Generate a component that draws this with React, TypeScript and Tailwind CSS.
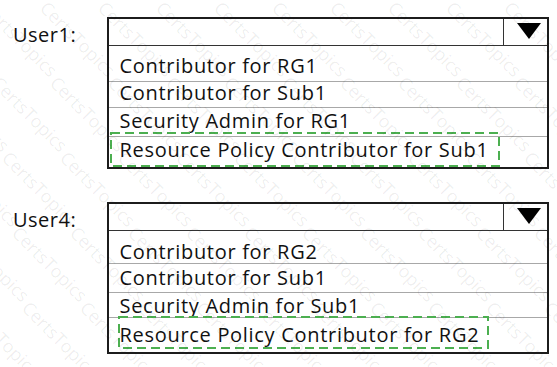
import React from "react";

type Row = { label: string; h: number; pt: number; line: boolean };

type Block = {
  user: string;
  rows: Row[];
  pick: { left: number; top: number; w: number; h: number };
};

const blocks: Block[] = [
  {
    user: "User1:",
    rows: [
      { label: "Contributor for RG1", h: 36, pt: 9.5, line: true },
      { label: "Contributor for Sub1", h: 26, pt: 0.5, line: true },
      { label: "Security Admin for RG1", h: 29, pt: 2.5, line: true },
      { label: "Resource Policy Contributor for Sub1", h: 30, pt: 2.5, line: false },
    ],
    pick: { left: 1, top: -5, w: 390, h: 35 },
  },
  {
    user: "User4:",
    rows: [
      { label: "Contributor for RG2", h: 33, pt: 10.5, line: true },
      { label: "Contributor for Sub1", h: 29, pt: 3.5, line: true },
      { label: "Security Admin for Sub1", h: 25, pt: 2.5, line: true },
      { label: "Resource Policy Contributor for RG2", h: 34, pt: 6.5, line: false },
    ],
    pick: { left: 9, top: -2, w: 371, h: 33 },
  },
];

function DashedBox({ w, h }: { w: number; h: number }) {
  return (
    <svg width={w} height={h} className="block">
      <rect
        x={1}
        y={1}
        width={w - 2}
        height={h - 2}
        fill="none"
        stroke="#4caf50"
        strokeWidth={2}
        strokeDasharray="9 5"
      />
    </svg>
  );
}

// faint diagonal "CertsTopics" stamp over the whole picture
function Watermark() {
  const marks = [];
  for (let r = 0; r < 6; r++) {
    for (let c = 0; c < 11; c++) {
      marks.push(
        <span
          key={`${r}-${c}`}
          className="absolute whitespace-nowrap text-[18px] leading-none text-[rgba(0,0,0,0.07)] origin-top-left rotate-45"
          style={{ left: c * 58 + r * 10 - 66, top: r * 75 - 2 }}
        >
          CertsTopics
        </span>
      );
    }
  }
  return <div className="pointer-events-none absolute inset-0 overflow-hidden">{marks}</div>;
}

export default function App() {
  return (
    <div
      className="relative w-[557px] h-[367px] overflow-hidden bg-white text-[#111]"
      style={{ fontFamily: "'Open Sans', 'Noto Sans', sans-serif" }}
    >
      <div className="flex flex-col gap-[33px] pt-[17px]">
        {blocks.map((b) => (
          <div key={b.user} className="flex">
            <div className="w-[107px] pl-[13px] pt-[7.5px] text-[20px] leading-none tracking-[0.5px]">
              {b.user}
            </div>
            <div className="w-[442px] border-2 border-[#1c1c1c]">
              <div className="flex h-[27px] border-b border-[#333]">
                <div className="flex-1" />
                <div className="w-[44px] border-l border-[#333] pl-[13px] pt-[4px]">
                  <svg width="24" height="16" viewBox="0 0 24 16" className="block">
                    <path d="M0 0 H24 L12 16 Z" fill="#000" />
                  </svg>
                </div>
              </div>
              {b.rows.map((row, i) => (
                <div
                  key={row.label}
                  className={`relative pl-[10.5px] text-[20px] leading-none tracking-[0.7px] ${row.line ? "border-b border-[#a8a8a8]" : ""}`}
                  style={{ height: row.h, paddingTop: row.pt }}
                >
                  {row.label}
                  {i === b.rows.length - 1 && (
                    <div className="absolute" style={{ left: b.pick.left, top: b.pick.top }}>
                      <DashedBox w={b.pick.w} h={b.pick.h} />
                    </div>
                  )}
                </div>
              ))}
            </div>
          </div>
        ))}
      </div>
      <Watermark />
    </div>
  );
}
